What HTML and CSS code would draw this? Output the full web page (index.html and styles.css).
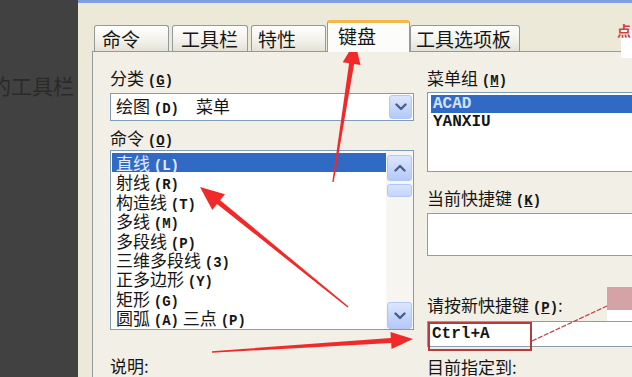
FILE: index.html
```html
<!DOCTYPE html>
<html lang="zh-CN">
<head>
<meta charset="utf-8">
<title>自定义用户界面 - 键盘</title>
<link rel="stylesheet" href="styles.css">
</head>
<body>
<div class="screen">
  <div class="side"><div class="side-text">的工具栏</div></div>
  <div class="dialog">
    <div class="titlebar"></div>
    <div class="tabs">
      <div class="tab t1">命令</div>
      <div class="tab t2">工具栏</div>
      <div class="tab t3">特性</div>
      <div class="tab active">键盘</div>
      <div class="tab t5">工具选项板</div>
    </div>
    <div class="panel">
      <div class="col">
        <div class="label">分类 <span class="k">(<u>G</u>)</span></div>
        <div class="combo">
          <span class="combo-text">绘图 <span class="k">(D)</span>　菜单</span>
          <span class="sbtn combo-btn"><svg viewBox="0 0 12 8" width="12" height="8"><path d="M1.5 1.5 L6 6 L10.5 1.5" fill="none" stroke="#4a5f8a" stroke-width="2.4" stroke-linecap="round" stroke-linejoin="round"/></svg></span>
        </div>
        <div class="label l2">命令 <span class="k">(<u>O</u>)</span></div>
        <div class="listbox cmd">
          <ul class="items">
            <li class="sel">直线 <span class="k">(L)</span></li>
            <li>射线 <span class="k">(R)</span></li>
            <li>构造线 <span class="k">(T)</span></li>
            <li>多线 <span class="k">(M)</span></li>
            <li>多段线 <span class="k">(P)</span></li>
            <li>三维多段线 <span class="k">(3)</span></li>
            <li>正多边形 <span class="k">(Y)</span></li>
            <li>矩形 <span class="k">(G)</span></li>
            <li>圆弧 <span class="k">(A)</span> 三点 <span class="k">(P)</span></li>
          </ul>
          <div class="scrollbar">
            <span class="sbtn up"><svg viewBox="0 0 12 8" width="12" height="8"><path d="M1.5 6.5 L6 2 L10.5 6.5" fill="none" stroke="#4a5f8a" stroke-width="2.4" stroke-linecap="round" stroke-linejoin="round"/></svg></span>
            <span class="thumb"></span>
            <span class="track"></span>
            <span class="sbtn down"><svg viewBox="0 0 12 8" width="12" height="8"><path d="M1.5 1.5 L6 6 L10.5 1.5" fill="none" stroke="#4a5f8a" stroke-width="2.4" stroke-linecap="round" stroke-linejoin="round"/></svg></span>
          </div>
        </div>
        <div class="label l3">说明:</div>
      </div>
      <div class="col">
        <div class="label">菜单组 <span class="k">(<u>M</u>)</span></div>
        <div class="listbox groups">
          <div class="gitem sel">ACAD</div>
          <div class="gitem">YANXIU</div>
        </div>
        <div class="label r2">当前快捷键 <span class="k">(<u>K</u>)</span></div>
        <div class="box keys"></div>
        <div class="label r3">请按新快捷键 <span class="k">(<u>P</u>)</span>:</div>
        <div class="box input">Ctrl+A</div>
        <div class="label r4">目前指定到:</div>
      </div>
    </div>
  </div>

  <div class="corner-white"></div>
  <div class="corner-mark">点</div>
  <div class="pink-box"></div>
  <div class="pink-under"></div>
  <div class="red-frame"></div>

  <svg class="overlay" width="632" height="377" viewBox="0 0 632 377">
    <line x1="532" y1="341" x2="607" y2="306" stroke="#c04048" stroke-width="1.2" stroke-dasharray="5 1.5"/>
    <polygon fill="#f02a2a" points="332.3,181.9 349.1,63.3 342.7,62.3 355,42 360.5,65.1 354.1,64.1 333.7,182.1"/>
    <polygon fill="#f02a2a" points="347.5,307.6 217,204 212.3,209.9 200,187 224.9,194.3 220.2,200.2 348.5,306.4"/>
    <polygon fill="#f02a2a" points="211.95,351.2 390.8,337.9 390.5,331.9 413,339 391.5,348.9 391.2,342.9 212.05,352.8"/>
  </svg>
</div>
</body>
</html>
```

FILE: styles.css
```css
* {
  box-sizing: border-box;
  margin: 0;
  padding: 0;
}

html,
body {
  width: 632px;
  height: 377px;
  overflow: hidden;
}

body {
  background: #404040;
  font-family: "Noto Sans CJK SC", "Noto Sans", sans-serif;
  color: #161616;
}

.screen {
  position: relative;
  display: flex;
  width: 632px;
  height: 377px;
  overflow: hidden;
}

/* left dark strip */
.side {
  flex: none;
  width: 78px;
  background: #414141;
  padding-top: 73px;
  overflow: hidden;
}

.side-text {
  margin-left: -10px;
  font-size: 21px;
  line-height: 24px;
  color: #2a2a2a;
  white-space: nowrap;
}

/* dialog */
.dialog {
  flex: none;
  width: 600px;
  background: #ece9d8;
  display: flex;
  flex-direction: column;
}

.titlebar {
  flex: none;
  height: 3px;
  background: #7f9fe2;
}

.tabs {
  flex: none;
  display: flex;
  align-items: flex-end;
  height: 48px;
  padding-top: 17px;
  padding-left: 16px;
  gap: 3px;
}

.tab {
  height: 26px;
  border: 1px solid #919b9c;
  border-bottom: none;
  border-radius: 3px 3px 0 0;
  background: linear-gradient(#ffffff, #f3f2ec 55%, #e4e2d7);
  font-size: 19px;
  line-height: 26px;
  padding-left: 7px;
  white-space: nowrap;
  overflow: hidden;
}

.t1 { width: 75px; padding-left: 7px; }
.t2 { width: 76px; padding-left: 8px; }
.t3 { width: 75px; padding-left: 6px; }
.t5 { width: 110px; padding-left: 5px; }

.tab.active {
  position: relative;
  z-index: 2;
  width: 83px;
  height: 32px;
  margin: 0 -3px -1px -2px;
  border-top: 3px solid #f2b84a;
  background: #fcfcfa;
  padding-left: 10px;
  line-height: 26px;
}

.panel {
  flex: 1;
  margin-left: 14px;
  border-top: 1px solid #919b9c;
  border-left: 1px solid #919b9c;
  background: #f2f0e6;
  display: grid;
  grid-template-columns: 304px 1fr;
  column-gap: 13px;
  padding-left: 17px;
  padding-top: 16px;
}

.col {
  display: flex;
  flex-direction: column;
  min-width: 0;
}

.label {
  flex: none;
  height: 20px;
  font-size: 17px;
  line-height: 20px;
  white-space: nowrap;
}

.k {
  font-family: "Liberation Mono", monospace;
  font-size: 14px;
  font-weight: 700;
}

.l2 { margin-top: 7px; }
.l3 { margin-top: 26px; }
.r2 { margin-top: 16px; }
.r3 { margin-top: 39px; }
.r4 { margin-top: 10px; }

/* combo box */
.combo {
  flex: none;
  margin-top: 5px;
  height: 28px;
  border: 1px solid #7f9db9;
  background: #ffffff;
  display: flex;
  align-items: center;
  justify-content: space-between;
  padding-left: 5px;
  padding-right: 1px;
}

.combo-text {
  font-size: 17px;
  line-height: 24px;
  white-space: nowrap;
}

.sbtn {
  display: flex;
  align-items: center;
  justify-content: center;
  border: 1px solid #b4c6f2;
  border-radius: 3px;
  background: linear-gradient(#dce6fd, #c3d4fb 60%, #b6c9f6);
}

.combo-btn {
  width: 23px;
  height: 24px;
}

/* list boxes */
.listbox {
  flex: none;
  border: 1px solid #7f9db9;
  background: #ffffff;
}

.cmd {
  margin-top: 2px;
  height: 180px;
  display: flex;
}

.items {
  flex: 1;
  list-style: none;
  padding: 2px 0 0 1px;
  min-width: 0;
}

.items li {
  height: 19.4px;
  line-height: 19.4px;
  font-size: 17px;
  padding-left: 4px;
  white-space: nowrap;
}

.items li.sel {
  background: #316ac5;
  color: #e4ecff;
}

.scrollbar {
  flex: none;
  width: 27px;
  display: flex;
  flex-direction: column;
  padding: 4px 1px 0 1px;
  background: #f6f5ef;
}

.scrollbar .up {
  height: 26px;
}

.scrollbar .thumb {
  margin-top: 3px;
  height: 13px;
  border: 1px solid #b4c6f2;
  border-radius: 3px;
  background: linear-gradient(#d8e3fd, #c4d4fb);
}

.scrollbar .track {
  flex: 1;
}

.scrollbar .down {
  height: 27px;
}

.groups {
  margin-top: 4px;
  height: 80px;
  padding: 2px 3px;
}

.gitem {
  height: 18px;
  line-height: 18px;
  font-family: "Liberation Mono", monospace;
  font-size: 16px;
  font-weight: 700;
  padding-left: 2px;
  white-space: nowrap;
}

.gitem.sel {
  background: #316ac5;
  color: #d4e2ff;
}

.box {
  flex: none;
  border: 1px solid #8e9cb0;
  background: #ffffff;
}

.keys {
  margin-top: 5px;
  height: 43px;
}

.input {
  margin-top: 6px;
  height: 26px;
  padding-left: 4px;
  font-family: "Liberation Mono", monospace;
  font-size: 16px;
  font-weight: 700;
  line-height: 24px;
}

/* overlays */
.overlay {
  position: absolute;
  left: 0;
  top: 0;
  pointer-events: none;
}

.red-frame {
  position: absolute;
  left: 428px;
  top: 322px;
  width: 104px;
  height: 29px;
  border: 2px solid #b83a3a;
}

.pink-box {
  position: absolute;
  left: 607px;
  top: 287px;
  width: 25px;
  height: 23px;
  background: #d5a3a6;
}

.pink-under {
  position: absolute;
  left: 607px;
  top: 310px;
  width: 25px;
  height: 11px;
  background: #ffffff;
}

.corner-white {
  position: absolute;
  left: 621px;
  top: 30px;
  width: 11px;
  height: 28px;
  background: #ffffff;
}

.corner-mark {
  position: absolute;
  left: 617px;
  top: 22px;
  font-size: 14px;
  line-height: 16px;
  font-weight: 700;
  color: #d04040;
}
```
